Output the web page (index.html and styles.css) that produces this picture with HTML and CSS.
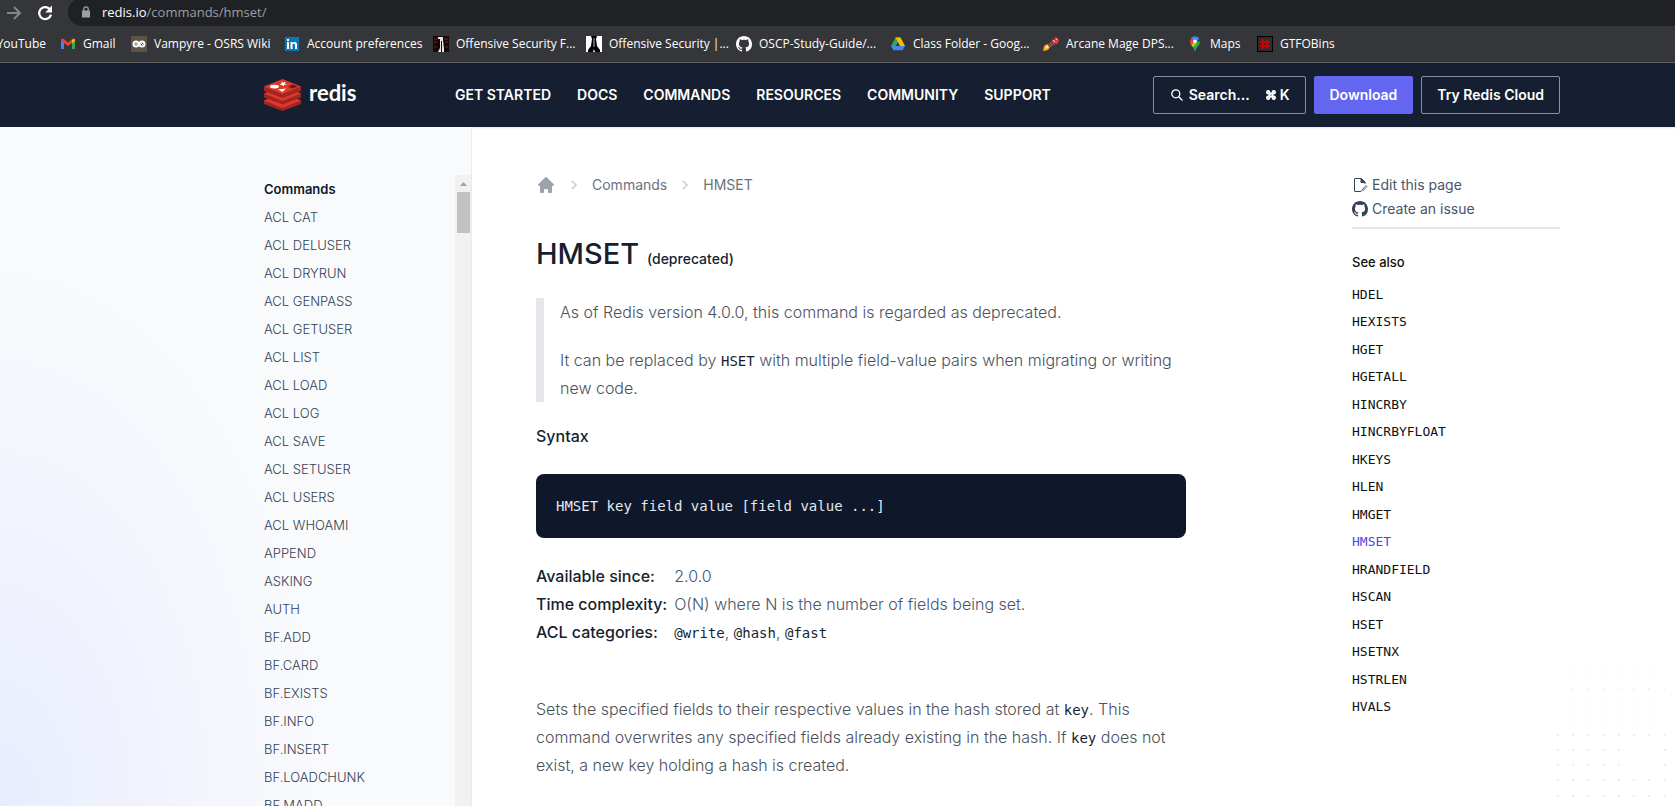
FILE: index.html
```html
<!DOCTYPE html>
<html lang="en">
<head>
<meta charset="utf-8">
<title>HMSET | Redis</title>
<link rel="stylesheet" href="styles.css">
</head>
<body>
<div class="browser">
  <div class="toolbar">
    <button class="tool" aria-label="Forward"><svg width="16" height="16" viewBox="0 0 16 16" fill="none" stroke="#85868a" stroke-width="2"><path d="M1 8h13M8 2l6 6-6 6"/></svg></button>
    <button class="tool" aria-label="Reload"><svg width="16" height="16" viewBox="0 0 16 16"><path d="M12.6 4A6 6 0 1 0 14 9.6" fill="none" stroke="#fff" stroke-width="2.2"/><path d="M15 .6v6.8H8.200z" fill="#fff"/></svg></button>
    <div class="omnibox">
      <svg width="8" height="12" viewBox="0 0 8 12"><path d="M0 4.500h8v7H0z" fill="#9aa0a6"/><path d="M1.800 5V3a2.200 2.200 0 0 1 4.400 0v2" fill="none" stroke="#9aa0a6" stroke-width="1.300"/></svg>
      <span class="url"><b>redis.io</b>/commands/hmset/</span>
    </div>
  </div>
  <nav class="bookmarks" aria-label="Bookmarks">
    <a class="bm bm-first" href="#">YouTube</a>
    <a class="bm" href="#"><svg width="16" height="16" viewBox="0 0 16 16"><path d="M1 4v9h3V6z" fill="#4285f4"/><path d="M15 4v9h-3V6z" fill="#34a853"/><path d="M1 3.200 3 2.500l5 4 5-4-1 4.500-4 3-4-3-3-2.300z" fill="#ea4335"/><path d="M12 4.200l1.500-1.600L15 3.500V5l-3 2.500z" fill="#fbbc04"/></svg>Gmail</a>
    <a class="bm" href="#"><svg width="16" height="16" viewBox="0 0 16 16"><path d="M0 0h16v16H0z" fill="#5f5443"/><g fill="none" stroke="#fff" stroke-width="2"><circle cx="5" cy="8" r="2.500"/><circle cx="11" cy="8" r="2.500"/></g><path d="M4 8h2M10 7l2 2" stroke="#fff"/></svg>Vampyre - OSRS Wiki</a>
    <a class="bm" href="#"><svg width="16" height="16" viewBox="0 0 16 16"><path d="M1 1h14v14H1z" fill="#0a78b5"/><path d="M3 6h2v7H3zM3 3h2v2H3zM6.500 6h2v1c1-1.600 4.500-1.500 4.500 1.500V13h-2V9c0-1.800-2.500-1.600-2.500 0v4h-2z" fill="#fff"/></svg>Account preferences</a>
    <a class="bm" href="#"><svg width="16" height="16" viewBox="0 0 16 16"><path d="M0 0h16v16H0z" fill="#170707"/><path d="M1 3h4M11 3h4M1 6h3M12 6h3M1 11h3M12 11h3" stroke="#5e3030"/><path d="M5 1h5v3l1 9v3H9V5H8v11H5l2-4V3H5z" fill="#e8e4e4"/></svg>Offensive Security F...</a>
    <a class="bm" href="#"><svg width="16" height="16" viewBox="0 0 16 16"><path d="M0 0h16v16H0z" fill="#fff"/><path d="M5 0h6l-1 3 1 7 3 4v2H9l-1-3-1 3H2v-2l3-4 1-7z" fill="#000"/><path d="M8 2v9" stroke="#bbb"/></svg>Offensive Security |...</a>
    <a class="bm" href="#"><svg width="16" height="16" viewBox="0 0 16 16"><use href="#octocat" fill="#fff"/></svg>OSCP-Study-Guide/...</a>
    <a class="bm" href="#"><svg width="16" height="16" viewBox="0 0 16 16"><path d="M5.500 1.500h5L8 6 3.500 14 1 10z" fill="#34a853"/><path d="M5.500 1.500h5L15 10h-5z" fill="#fbbc04"/><path d="M3.400 10H15l-2.300 4.300H3.500L1 10z" fill="#4285f4"/></svg>Class Folder - Goog...</a>
    <a class="bm" href="#"><svg width="16" height="16" viewBox="0 0 16 16"><path d="M0 15l1-5 3-2 3 3-2 3z" fill="#f9a825"/><path d="M2 13l2-4 2 2z" fill="#fff3b0"/><path d="M4 8l3-1 2-3 4 4-4 2-2 2z" fill="#7a5048"/><path d="M9 3l2 1 1-3 3 1 1 3-2 3-4-1z" fill="#e53946"/><path d="M10 4l2 2M13 3l1 1" stroke="#fbdada"/></svg>Arcane Mage DPS...</a>
    <a class="bm" href="#"><svg width="16" height="16" viewBox="0 0 16 16"><path d="M3 5.500C3 9.500 7 11 8 16c1-5 5-6.500 5-10.500z" fill="#34a853"/><path d="M3 5a5 5 0 0 0 1.500 4L9 4 5 1z" fill="#ea4335"/><path d="M4.300 1.700A5 5 0 0 1 12.300 2.900L8 7z" fill="#4285f4"/><path d="M4.500 9 7.500 5.500l2 1.500L6 11z" fill="#fbbc04"/><circle cx="8" cy="5.200" r="1.800" fill="#fff"/></svg>Maps</a>
    <a class="bm" href="#"><svg width="16" height="16" viewBox="0 0 16 16"><path d="M.5.5h15v15H.5z" fill="#2b2b2b" stroke="#000"/><path d="M6 3v10M10 3v10M3 6h10M3 10h10" stroke="#c00" stroke-width="2"/></svg>GTFOBins</a>
  </nav>
</div>

<svg class="defs" aria-hidden="true"><defs><path id="octocat" d="M8 0C3.580 0 0 3.580 0 8c0 3.540 2.290 6.530 5.470 7.590.4.070.55-.17.55-.38 0-.19-.01-.82-.01-1.490-2.010.37-2.530-.49-2.690-.94-.09-.23-.48-.94-.82-1.130-.28-.15-.68-.52-.01-.53.63-.01 1.080.58 1.230.82.72 1.210 1.870.87 2.330.66.07-.52.28-.87.51-1.070-1.780-.2-3.640-.89-3.640-3.950 0-.87.31-1.590.82-2.150-.08-.2-.36-1.020.08-2.120 0 0 .67-.21 2.200.82.64-.18 1.320-.27 2-.27s1.360.09 2 .27c1.530-1.040 2.200-.82 2.200-.82.44 1.100.16 1.920.08 2.120.51.56.82 1.270.82 2.150 0 3.070-1.870 3.750-3.650 3.950.29.25.54.73.54 1.480 0 1.070-.01 1.930-.01 2.200 0 .21.15.46.55.38A8.010 8.010 0 0 0 16 8c0-4.420-3.580-8-8-8z"/></defs></svg>

<header class="site-header">
  <a class="logo" href="#">
    <svg width="37" height="32" viewBox="0 0 37 32"><path d="M0 21.500 18.500 14 37 21.500V25l-18.500 7L0 25z" fill="#a32422"/><path d="M0 21.500 18.500 14 37 21.500 18.500 29z" fill="#dc382c"/><path d="M0 14.500 18.500 8 37 14.500V18.500l-18.500 7L0 18.500z" fill="#a32422"/><path d="M0 14.500 18.500 7 37 14.500 18.500 22z" fill="#dc382c"/><path d="M0 7.500 18.500 1 37 7.500V12l-18.500 7L0 12z" fill="#a32422"/><path d="M0 7.500 18.500 0 37 7.500 18.500 15z" fill="#dc382c"/><ellipse cx="10.500" cy="7.600" rx="4.500" ry="1.900" fill="#fff"/><path d="M18 2.500l1 1.200 2.800-.7-1 1.500 2.200 1-2.700.3-.8 1.400-1.300-1.300-2.700.2 1.600-1.200zM14 10.500l8-1-3.500 3.500z" fill="#fff"/><path d="M24 7.500l5-2 4.500 2-5 2z" fill="#731613"/></svg>
    <span>redis</span>
  </a>
  <nav class="main-nav">
    <a href="#">GET STARTED</a><a href="#">DOCS</a><a href="#">COMMANDS</a><a href="#">RESOURCES</a><a href="#">COMMUNITY</a><a href="#">SUPPORT</a>
  </nav>
  <div class="actions">
    <button class="btn search"><svg width="12" height="12" viewBox="0 0 12 12" fill="none" stroke="#fff" stroke-width="1.300"><circle cx="4.800" cy="4.800" r="4"/><path d="M7.700 7.700 11.500 11.500"/></svg>Search...<span class="keys"><svg width="10" height="10" viewBox="0 0 10 10" fill="none" stroke="#fff" stroke-width="1.800"><path d="M3.500 3.500h3v3h-3zM3.500 3.500H2.200a1.300 1.300 0 1 1 1.300-1.300zM6.500 3.500V2.200a1.300 1.300 0 1 1 1.300 1.300zM6.500 6.500h1.300a1.300 1.300 0 1 1-1.300 1.300zM3.500 6.500v1.300a1.300 1.300 0 1 1-1.300-1.300z"/></svg>K</span></button>
    <button class="btn primary">Download</button>
    <button class="btn">Try Redis Cloud</button>
  </div>
</header>

<div class="layout">
  <aside class="sidebar">
    <ul class="commands">
      <li><a class="head" href="#">Commands</a></li>
      <li><a href="#">ACL CAT</a></li><li><a href="#">ACL DELUSER</a></li><li><a href="#">ACL DRYRUN</a></li><li><a href="#">ACL GENPASS</a></li><li><a href="#">ACL GETUSER</a></li><li><a href="#">ACL LIST</a></li><li><a href="#">ACL LOAD</a></li><li><a href="#">ACL LOG</a></li><li><a href="#">ACL SAVE</a></li><li><a href="#">ACL SETUSER</a></li><li><a href="#">ACL USERS</a></li><li><a href="#">ACL WHOAMI</a></li><li><a href="#">APPEND</a></li><li><a href="#">ASKING</a></li><li><a href="#">AUTH</a></li><li><a href="#">BF.ADD</a></li><li><a href="#">BF.CARD</a></li><li><a href="#">BF.EXISTS</a></li><li><a href="#">BF.INFO</a></li><li><a href="#">BF.INSERT</a></li><li><a href="#">BF.LOADCHUNK</a></li><li><a href="#">BF.MADD</a></li>
    </ul>
    <div class="scrollbar"><svg width="7" height="4" viewBox="0 0 7 4"><path d="M0 4 3.500 0 7 4z" fill="#a3a3a3"/></svg><div class="thumb"></div></div>
  </aside>

  <main class="content">
    <nav class="crumbs" aria-label="Breadcrumb">
      <a class="home" href="#" aria-label="Home"><svg width="20" height="20" viewBox="0 0 20 20" fill="#9ca3af"><path d="M10.700 2.300a1 1 0 0 0-1.400 0l-7 7a1 1 0 0 0 1.400 1.400L4 10.400V17a1 1 0 0 0 1 1h2a1 1 0 0 0 1-1v-2a1 1 0 0 1 1-1h2a1 1 0 0 1 1 1v2a1 1 0 0 0 1 1h2a1 1 0 0 0 1-1v-6.600l.3.3a1 1 0 0 0 1.400-1.400z"/></svg></a>
      <svg width="6" height="10" viewBox="0 0 6 10" fill="none" stroke="#cbd5e1" stroke-width="1.800"><path d="M.8.8 5 5 .8 9.200"/></svg>
      <a href="#">Commands</a>
      <svg width="6" height="10" viewBox="0 0 6 10" fill="none" stroke="#cbd5e1" stroke-width="1.800"><path d="M.8.8 5 5 .8 9.200"/></svg>
      <a href="#">HMSET</a>
    </nav>
    <h1>HMSET <small>(deprecated)</small></h1>
    <blockquote>
      <p>As of Redis version 4.0.0, this command is regarded as deprecated.</p>
      <p>It can be replaced by <code>HSET</code> with multiple field-value pairs when migrating or writing new code.</p>
    </blockquote>
    <h2>Syntax</h2>
    <pre class="syntax">HMSET key field value [field value ...]</pre>
    <dl class="facts">
      <dt>Available since:</dt><dd>2.0.0</dd>
      <dt>Time complexity:</dt><dd>O(N) where N is the number of fields being set.</dd>
      <dt>ACL categories:</dt><dd><code>@write</code>, <code>@hash</code>, <code>@fast</code></dd>
    </dl>
    <p>Sets the specified fields to their respective values in the hash stored at <code>key</code>. This command overwrites any specified fields already existing in the hash. If <code>key</code> does not exist, a new key holding a hash is created.</p>
  </main>

  <aside class="rail">
    <div class="page-links">
      <a href="#"><svg width="16" height="16" viewBox="0 0 16 16" fill="none" stroke="#334155"><path d="M9 14.500H3a.5.5 0 0 1-.5-.5V2a.5.5 0 0 1 .5-.5h6.500L13 5v2"/><path d="M9 1.500V5.500h4z" fill="#334155"/><path d="M9.500 13.500l4.500-5 1 1-4.500 4.500z" stroke-width=".8"/></svg>Edit this page</a>
      <a href="#"><svg width="16" height="16" viewBox="0 0 16 16"><use href="#octocat" fill="#334155"/></svg>Create an issue</a>
    </div>
    <h3>See also</h3>
    <ul class="see-also">
      <li><a href="#">HDEL</a></li><li><a href="#">HEXISTS</a></li><li><a href="#">HGET</a></li><li><a href="#">HGETALL</a></li><li><a href="#">HINCRBY</a></li><li><a href="#">HINCRBYFLOAT</a></li><li><a href="#">HKEYS</a></li><li><a href="#">HLEN</a></li><li><a href="#">HMGET</a></li><li><a class="current" href="#">HMSET</a></li><li><a href="#">HRANDFIELD</a></li><li><a href="#">HSCAN</a></li><li><a href="#">HSET</a></li><li><a href="#">HSETNX</a></li><li><a href="#">HSTRLEN</a></li><li><a href="#">HVALS</a></li>
    </ul>
  </aside>

  <svg class="dots" width="120" height="136" viewBox="0 0 120 136" fill="none" stroke-width="2" stroke-linecap="round" stroke-dasharray="0 15.200">
    <path d="M18 2h93M18 19h93M18 34h93M18 50h93" stroke="#f0f0f1"/>
    <path d="M3 65h108M3 80h63M110 80h2M3 95h63M110 95h2M3 110h108M3 126h108" stroke="#e9e9eb"/>
  </svg>
</div>
</body>
</html>
```
FILE: styles.css
```css
* { box-sizing: border-box; }

body {
  margin: 0;
  height: 100vh;
  display: flex;
  flex-direction: column;
  overflow: hidden;
  background: #fff;
  color: #161f31;
  font-family: Inter, "Liberation Sans", sans-serif;
  font-size: 16px;
  line-height: 28px;
}

a { color: inherit; text-decoration: none; }
ul { list-style: none; margin: 0; padding: 0; }
button { font: inherit; color: inherit; background: none; border: 0; padding: 0; }
svg { display: block; flex: none; }
.defs { position: absolute; width: 0; height: 0; }

/* Browser chrome */
.browser {
  flex: none;
  background: #35363a;
  border-bottom: 1px solid #5f6064;
  color: #fff;
  font-family: "Open Sans", "Noto Sans", sans-serif;
  font-size: 12px;
  line-height: 16px;
}
.toolbar { display: flex; align-items: center; height: 26px; padding-left: 6px; }
.tool { width: 31px; height: 24px; display: flex; align-items: center; }
.omnibox {
  flex: 1;
  display: flex;
  align-items: center;
  gap: 12px;
  height: 28px;
  margin-top: -2px;
  padding-left: 14px;
  border-radius: 14px 0 0 14px;
  background: #202124;
}
.url { color: #9a9ea3; font-size: 13px; }
.url b { color: #fff; font-weight: 400; }
.bookmarks {
  display: grid;
  grid-template-columns: 60px 71px 153px 149px 153px 150px 154px 153px 144px 70px auto;
  align-items: center;
  height: 36px;
}
.bm { display: flex; align-items: center; gap: 7px; white-space: nowrap; }
.bm-first { justify-content: flex-end; padding-right: 14px; }

/* Site header */
.site-header {
  flex: none;
  display: flex;
  align-items: center;
  height: 64px;
  padding: 0 115px 0 264px;
  background: #161f31;
  color: #fff;
  font-size: 14px;
  font-weight: 600;
  line-height: 20px;
}
.logo { display: flex; align-items: center; gap: 8px; width: 191px; font: 700 22px/24px Lato, sans-serif; }
.logo span { padding-bottom: 4px; }
.main-nav { display: flex; gap: 26px; }
.actions { display: flex; gap: 8px; margin-left: auto; }
.btn {
  display: flex;
  align-items: center;
  height: 38px;
  padding: 0 15px;
  border: 1px solid #8b919c;
  border-radius: 2px;
}
.primary { background: #6366f1; border-color: #6366f1; }
.search { gap: 6px; padding-left: 17px; }
.keys { display: flex; align-items: center; gap: 4px; margin-left: 10px; }

/* Page body */
.layout {
  flex: 1;
  min-height: 0;
  display: flex;
  position: relative;
  box-shadow: inset 0 2px 2px -1px #e8e9ee;
}
.sidebar {
  flex: none;
  display: flex;
  width: 472px;
  padding: 48px 0 0 264px;
  border-right: 1px solid #e8eaef;
  background: radial-gradient(ellipse 330px 560px at 0 100%, #e9ecfd, #f2f5fe 55%, #f9fafc);
}
.commands { flex: 1; overflow: hidden; font-size: 13px; font-weight: 300; color: #334155; }
.commands .head { color: #0f172a; font-weight: 600; }
.scrollbar {
  display: flex;
  flex-direction: column;
  align-items: center;
  gap: 6px;
  width: 16px;
  padding-top: 7px;
  background: #f1f1f1;
}
.thumb { width: 13px; height: 41px; background: #c1c1c1; }

.content { flex: 1; min-width: 0; max-width: 714px; padding: 44px 0 0 64px; color: #4b515c; font-weight: 300; }
.content p { margin: 0; }
.crumbs { display: flex; align-items: center; gap: 15px; font-size: 14px; font-weight: 400; color: #6b7280; }
.crumbs .home { width: 20px; }
h1 { margin: 35px 0 19px; color: #161f31; font-size: 29px; font-weight: 500; line-height: 40px; }
h1 small { font-size: 14px; }
blockquote { display: grid; gap: 20px; margin: 0; padding-left: 16px; border-left: 8px solid #e5e7eb; }
code, .syntax, .see-also { font-family: "DejaVu Sans Mono", "Liberation Mono", monospace; font-weight: 400; }
code { color: #161f31; font-size: 14px; line-height: 16px; }
h2 { margin: 20px 0 24px; color: #161f31; font-size: 16px; font-weight: 500; line-height: 28px; }
.syntax {
  margin: 0 0 24px;
  padding: 18px 20px;
  border-radius: 8px;
  background: #0f172a;
  color: #e2e8f0;
  font-size: 14px;
  line-height: 28px;
}
.facts { display: grid; grid-template-columns: auto 1fr; column-gap: 7px; margin: 0 0 49px; color: #475569; }
.facts dt { color: #161f31; font-weight: 500; }
.facts dd { margin: 0; }

.rail { width: 208px; margin: 0 115px 0 auto; padding-top: 46px; }
.page-links { padding-bottom: 6px; border-bottom: 2px solid #e5e7eb; font-size: 14px; line-height: 24px; color: #475569; }
.page-links a { display: flex; align-items: center; gap: 4px; }
h3 { margin: 20px 0 6px; color: #111; font-size: 13px; font-weight: 500; line-height: 26px; }
.see-also { display: grid; min-height: 440px; align-items: center; font-size: 13px; line-height: 20px; color: #111; }
.see-also .current { color: #4f46e5; }

.dots { position: absolute; right: 0; bottom: 0; }
```
